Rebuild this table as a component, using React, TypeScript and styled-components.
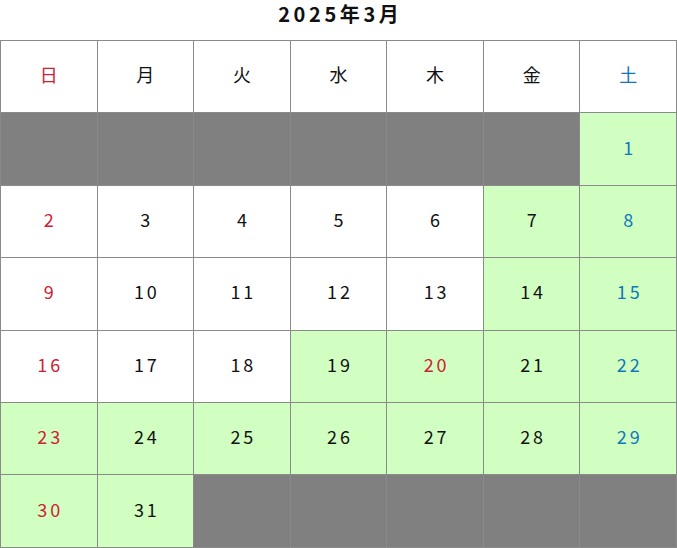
import styled, { createGlobalStyle } from "styled-components";

const GlobalStyle = createGlobalStyle`
  html, body {
    margin: 0;
    padding: 0;
    background: #ffffff;
  }
  body {
    font-family: "Noto Sans CJK JP", "Noto Sans", sans-serif;
  }
`;

type Tone = "sun" | "sat" | "plain";
type Fill = "white" | "green" | "gray";

interface Day {
  label?: string;
  tone?: Tone;
  fill: Fill;
}

const weekdays: { label: string; tone: Tone }[] = [
  { label: "日", tone: "sun" },
  { label: "月", tone: "plain" },
  { label: "火", tone: "plain" },
  { label: "水", tone: "plain" },
  { label: "木", tone: "plain" },
  { label: "金", tone: "plain" },
  { label: "土", tone: "sat" },
];

const green = new Set([1, 7, 8, 14, 15, 19, 20, 21, 22, 23, 24, 25, 26, 27, 28, 29, 30, 31]);
const holidays = new Set([20]);

const buildDays = (): Day[] => {
  const days: Day[] = [];
  for (let i = 0; i < 6; i++) days.push({ fill: "gray" });
  for (let d = 1; d <= 31; d++) {
    const col = (d + 5) % 7;
    let tone: Tone = "plain";
    if (col === 0 || holidays.has(d)) tone = "sun";
    else if (col === 6) tone = "sat";
    days.push({ label: String(d), tone, fill: green.has(d) ? "green" : "white" });
  }
  while (days.length < 42) days.push({ fill: "gray" });
  return days;
};

const App = () => {
  const days = buildDays();
  return (
    <>
      <GlobalStyle />
      <Wrapper>
        <Title>2025年3月</Title>
        <Grid>
          {weekdays.map((w) => (
            <Cell key={w.label} $fill="white" $tone={w.tone}>
              {w.label}
            </Cell>
          ))}
          {days.map((d, i) => (
            <Cell key={i} $fill={d.fill} $tone={d.tone ?? "plain"}>
              {d.label}
            </Cell>
          ))}
        </Grid>
      </Wrapper>
    </>
  );
};

export default App;

const Wrapper = styled.div`
  width: 677px;
  display: flex;
  flex-direction: column;
`;

const Title = styled.h1`
  margin: 0;
  height: 40px;
  line-height: 28px;
  text-align: center;
  font-size: 20px;
  font-weight: 700;
  letter-spacing: 0.18em;
  padding-left: 0.18em;
  color: #111111;
`;

const fills: Record<Fill, string> = {
  white: "#ffffff",
  green: "#d1ffc1",
  gray: "#808080",
};

const tones: Record<Tone, string> = {
  sun: "#cc2233",
  sat: "#1177bb",
  plain: "#111111",
};

const Grid = styled.div`
  display: grid;
  grid-template-columns: repeat(7, 1fr);
  grid-auto-rows: 71.4px;
  gap: 1px;
  padding: 1px;
  background: #8a8a8a;
`;

const Cell = styled.div<{ $fill: Fill; $tone: Tone }>`
  display: flex;
  align-items: center;
  justify-content: center;
  padding-bottom: 5px;
  background: ${({ $fill }) => fills[$fill]};
  color: ${({ $tone }) => tones[$tone]};
  font-size: 18px;
  letter-spacing: 0.16em;
  padding-left: 0.16em;
`;
